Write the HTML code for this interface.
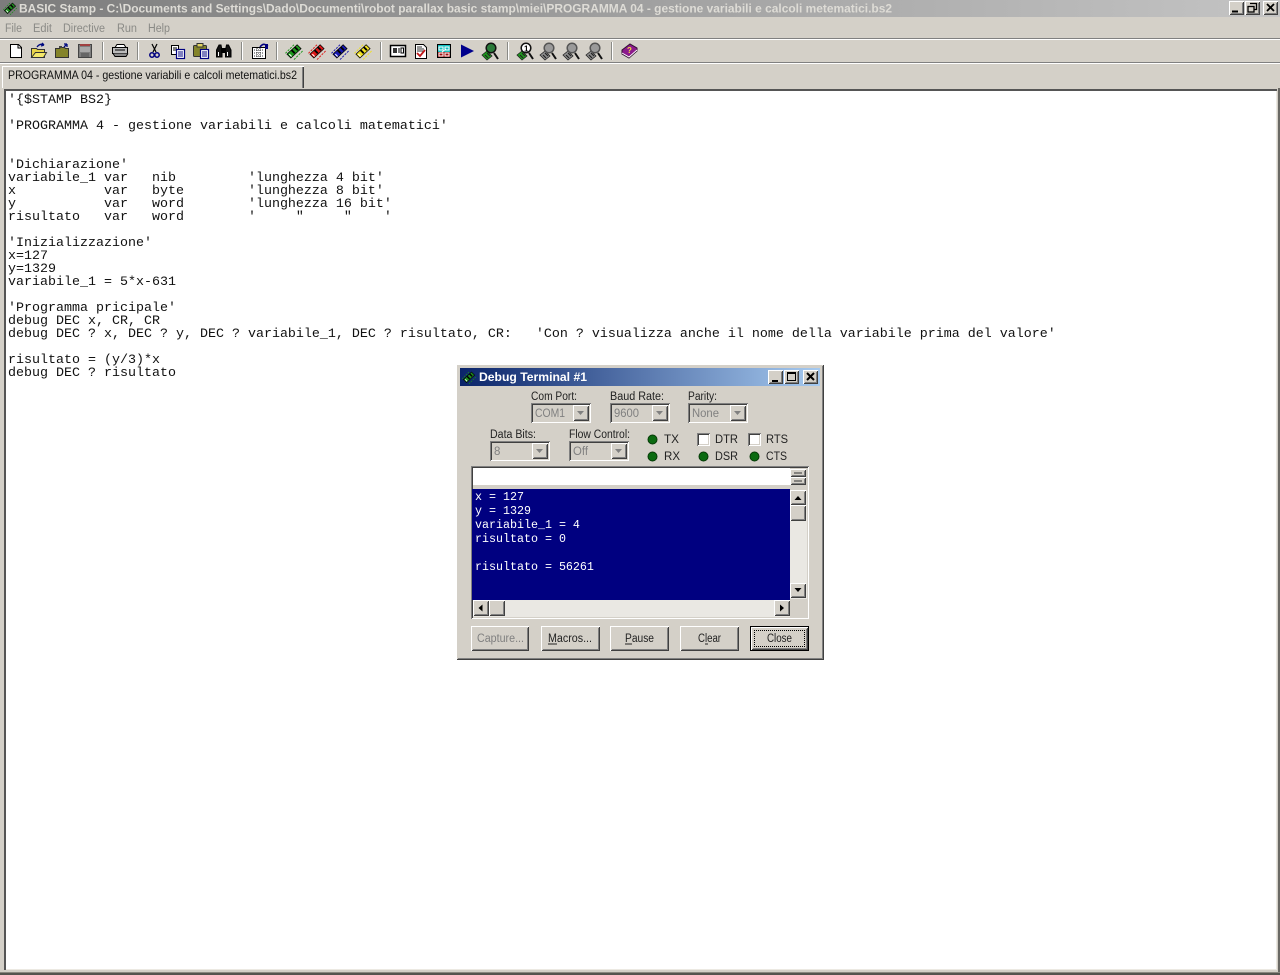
<!DOCTYPE html>
<html><head><meta charset="utf-8"><title>BASIC Stamp</title>
<style>
html,body{margin:0;padding:0;width:1280px;height:975px;overflow:hidden;background:#d4d0c8}
div{position:absolute;box-sizing:border-box}
.b{background:#d4d0c8;box-shadow:inset 1px 1px #fff,inset -1px -1px #404040,inset 2px 2px #d4d0c8,inset -2px -2px #808080}
.s{box-shadow:inset 1px 1px #808080,inset -1px -1px #fff,inset 2px 2px #404040,inset -2px -2px #d4d0c8}
pre{position:absolute;margin:0;font-family:"Liberation Mono",monospace}
svg{position:absolute;left:0;top:0}
text{font-family:"Liberation Sans",sans-serif;font-size:11.5px;fill:#222}
.d{fill:#808080}
.m{fill:#8a8a86}
</style></head>
<body>
<div style="left:0;top:0;width:1280px;height:17px;background:linear-gradient(90deg,#7c7c7c,#c4c4c4)"></div>
<div style="left:0;top:38px;width:1280px;height:1px;background:#808080"></div>
<div style="left:0;top:39px;width:1280px;height:1px;background:#fff"></div>
<div style="left:0;top:62px;width:1280px;height:1px;background:#808080"></div>
<div style="left:0;top:63px;width:1280px;height:1px;background:#fff"></div>
<!-- window buttons -->
<div class="b" style="left:1229px;top:1px;width:15px;height:14px"></div>
<div class="b" style="left:1245px;top:1px;width:15px;height:14px"></div>
<div class="b" style="left:1263px;top:1px;width:15px;height:14px"></div>
<!-- tab -->
<div style="left:2px;top:66px;width:302px;height:22px;background:#d4d0c8;box-shadow:inset 1px 1px #fff,inset -1px 0 #404040,inset -2px 0 #808080"></div>
<!-- editor -->
<div style="left:4px;top:89px;width:1273px;height:881px;background:#fff;box-shadow:inset 2px 2px #555,inset -1px -1px #ece9e2"></div>
<div style="left:0;top:972px;width:1280px;height:1px;background:#8a8880"></div>
<div style="left:0;top:973px;width:1280px;height:2px;background:#55544f"></div>
<div style="left:1278px;top:88px;width:2px;height:884px;background:#6a6964"></div>
<pre style="left:8px;top:94px;font-size:13.33px;line-height:13px;color:#111">'{$STAMP BS2}

'PROGRAMMA 4 - gestione variabili e calcoli matematici'


'Dichiarazione'
variabile_1 var   nib         'lunghezza 4 bit'
x           var   byte        'lunghezza 8 bit'
y           var   word        'lunghezza 16 bit'
risultato   var   word        '     "     "    '

'Inizializzazione'
x=127
y=1329
variabile_1 = 5*x-631

'Programma pricipale'
debug DEC x, CR, CR
debug DEC ? x, DEC ? y, DEC ? variabile_1, DEC ? risultato, CR:   'Con ? visualizza anche il nome della variabile prima del valore'

risultato = (y/3)*x
debug DEC ? risultato</pre>
<!-- dialog -->
<div class="b" style="left:456px;top:364px;width:368px;height:296px"></div>
<div style="left:460px;top:368px;width:360px;height:18px;background:linear-gradient(90deg,#0a246a,#a6caf0)"></div>
<div class="b" style="left:768px;top:370px;width:15px;height:14px"></div>
<div class="b" style="left:784px;top:370px;width:15px;height:14px"></div>
<div class="b" style="left:803px;top:370px;width:15px;height:14px"></div>
<div class="s" style="left:531px;top:403px;width:60px;height:20px"></div>
<div class="b" style="left:573px;top:405px;width:16px;height:16px"></div>
<div class="s" style="left:610px;top:403px;width:60px;height:20px"></div>
<div class="b" style="left:652px;top:405px;width:16px;height:16px"></div>
<div class="s" style="left:688px;top:403px;width:60px;height:20px"></div>
<div class="b" style="left:730px;top:405px;width:16px;height:16px"></div>
<div class="s" style="left:490px;top:441px;width:60px;height:20px"></div>
<div class="b" style="left:532px;top:443px;width:16px;height:16px"></div>
<div class="s" style="left:569px;top:441px;width:60px;height:20px"></div>
<div class="b" style="left:611px;top:443px;width:16px;height:16px"></div>
<div class="s" style="left:697px;top:433px;width:13px;height:13px;background:#fff"></div>
<div class="s" style="left:748px;top:433px;width:13px;height:13px;background:#fff"></div>
<!-- terminal frame -->
<div class="s" style="left:471px;top:466px;width:338px;height:153px;background:#d4d0c8"></div>
<div style="left:473px;top:468px;width:317px;height:17px;background:#fff"></div>
<div class="b" style="left:790px;top:469px;width:16px;height:8px"></div>
<div class="b" style="left:790px;top:477px;width:16px;height:8px"></div>
<div style="left:472px;top:489px;width:318px;height:111px;background:#000080"></div>
<div style="left:790px;top:490px;width:17px;height:109px;background:#eae8e3"></div>
<div class="b" style="left:790px;top:490px;width:16px;height:15px"></div>
<div class="b" style="left:790px;top:505px;width:16px;height:16px"></div>
<div class="b" style="left:790px;top:583px;width:16px;height:15px"></div>
<div style="left:473px;top:600px;width:317px;height:17px;background:#eae8e3"></div>
<div class="b" style="left:473px;top:600px;width:16px;height:16px"></div>
<div class="b" style="left:489px;top:600px;width:16px;height:16px"></div>
<div class="b" style="left:774px;top:600px;width:16px;height:16px"></div>
<pre style="left:475px;top:490px;font-size:11.67px;line-height:14px;color:#fff">x = 127
y = 1329
variabile_1 = 4
risultato = 0

risultato = 56261</pre>
<div class="b" style="left:471px;top:626px;width:58px;height:25px"></div>
<div class="b" style="left:541px;top:626px;width:59px;height:25px"></div>
<div class="b" style="left:610px;top:626px;width:59px;height:25px"></div>
<div class="b" style="left:680px;top:626px;width:59px;height:25px"></div>
<div class="b" style="left:751px;top:627px;width:57px;height:23px;outline:1px solid #000"></div>
<div style="left:754px;top:630px;width:51px;height:17px;border:1px dotted #000"></div>

<svg width="1280" height="975" viewBox="0 0 1280 975">
<defs>
<g id="chip">
<path d="M-9 4 L4 -8 L9 -3 L-4 9 Z" fill="currentColor" stroke="#000" stroke-width="1"/>
<path d="M-3 -1 L1 3 M1 -5 L5 -1" stroke="#000" stroke-width="2.4"/>
<path d="M-6 4 L-3 7" stroke="#fff" stroke-width="1.4"/>
<path d="M-9 1 L-11 3 M-6 -2 L-8 0 M-3 -5 L-5 -3 M0 -8 L-2 -6 M9 2 L11 0 M6 5 L8 3 M3 8 L5 6 M0 11 L2 9" stroke="currentColor" stroke-width="1.2"/>
</g>
<g id="mag">
<path d="M-8 4 L-3 0 L2 5 L-3 9 Z" fill="currentColor" stroke="#222" stroke-width=".8"/>
<path d="M-5 4 L-2 7 M-3 2 L0 5" stroke="#222" stroke-width="1.2"/>
<path d="M4 2 L8 8" stroke="#111" stroke-width="2"/>
<circle cx="1" cy="-3" r="4.800" fill="var(--f,#fff)" stroke="var(--r,#111)" stroke-width="1.500"/>
</g>
</defs>
<!-- title -->
<use href="#chip" transform="translate(10,8) scale(.62)" color="#1e8a1e"/>
<text x="19" y="12.5" textLength="873" lengthAdjust="spacingAndGlyphs" style="font-weight:bold;font-size:12px;fill:#dedcd6">BASIC Stamp - C:\Documents and Settings\Dado\Documenti\robot parallax basic stamp\miei\PROGRAMMA 04 - gestione variabili e calcoli metematici.bs2</text>
<path d="M1232 11.5h6" stroke="#000" stroke-width="2"/>
<path d="M1250 3.500h6.500v6h-2" fill="none" stroke="#000" stroke-width="1.300"/><rect x="1248" y="6.500" width="6" height="5.500" fill="none" stroke="#000" stroke-width="1.300"/>
<path d="M1267 4l7 7M1274 4l-7 7" stroke="#000" stroke-width="1.800"/>
<!-- menu -->
<g class="m"><text class="m" x="5" y="32" textLength="17" lengthAdjust="spacingAndGlyphs">File</text><text class="m" x="33" y="32" textLength="19" lengthAdjust="spacingAndGlyphs">Edit</text><text class="m" x="63" y="32" textLength="42" lengthAdjust="spacingAndGlyphs">Directive</text><text class="m" x="117" y="32" textLength="20" lengthAdjust="spacingAndGlyphs">Run</text><text class="m" x="148" y="32" textLength="22" lengthAdjust="spacingAndGlyphs">Help</text></g>
<!-- toolbar separators -->
<path d="M102.500 42v18M137.500 42v18M241.500 42v18M276.500 42v18M380.500 42v18M507.500 42v18M611.500 42v18" stroke="#8a8a86"/>
<path d="M103.500 42v18M138.500 42v18M242.500 42v18M277.500 42v18M381.500 42v18M508.500 42v18M612.500 42v18" stroke="#fff"/>
<!-- new -->
<path d="M10.500 44.500h8l3 3v10h-11z" fill="#fff" stroke="#000"/><path d="M18 45v3h3" fill="none" stroke="#000"/>
<!-- open -->
<path d="M31.500 57.500v-9h5l1 1h7v8z" fill="#e8d44a" stroke="#333"/><path d="M31.500 57.500l4-5h11l-3 5z" fill="#f4e86a" stroke="#333"/><path d="M37 47q3-4 7-2M44 45l-2-2M44 45l-3 1" fill="none" stroke="#000a80" stroke-width="1.300"/>
<!-- open2 -->
<path d="M55.500 57.500v-9h4l1-1h4l1 1h3v9z" fill="#84842a" stroke="#333"/><path d="M64 47l3-3M67 44h-3M67 44v3" fill="none" stroke="#000a80" stroke-width="1.300"/><rect x="59" y="46" width="3" height="2" fill="#444"/>
<!-- save disabled -->
<rect x="78.500" y="44.500" width="13" height="13" fill="#7f7f7f" stroke="#444"/><rect x="80" y="44" width="10" height="2" fill="#a04040"/><rect x="80" y="47" width="10" height="5" fill="#a8a8a8"/><rect x="81" y="53" width="8" height="4" fill="#666"/>
<!-- print -->
<path d="M115 47.500l2-3h7l2 3" fill="#fff" stroke="#000"/><rect x="112.500" y="47.500" width="15" height="6" fill="#bbb" stroke="#000"/><path d="M113 53.500l2 3h11l2-3" fill="#888" stroke="#000"/><path d="M115 50h10" stroke="#000"/>
<!-- cut -->
<path d="M152 44l4 8M157 44l-4 8" stroke="#000" stroke-width="1.200"/><circle cx="152" cy="55" r="2.200" fill="none" stroke="#000080" stroke-width="1.500"/><circle cx="157" cy="55" r="2.200" fill="none" stroke="#000080" stroke-width="1.500"/>
<!-- copy -->
<rect x="171.500" y="45.500" width="7" height="9" fill="#fff" stroke="#000"/><path d="M173 48h4M173 50h4" stroke="#000"/><rect x="176.500" y="49.500" width="8" height="9" fill="#fff" stroke="#000080" stroke-width="1.200"/><path d="M178 52h5M178 54h5M178 56h5" stroke="#000080"/>
<!-- paste -->
<rect x="193.500" y="45.500" width="13" height="11" rx="1" fill="#84842a" stroke="#333"/><rect x="197" y="43.500" width="6" height="3.500" fill="#e0d460" stroke="#333"/><rect x="200.500" y="49.500" width="8" height="9" fill="#fff" stroke="#000080" stroke-width="1.200"/><path d="M202 52h5M202 54h5M202 56h5" stroke="#000080"/>
<!-- find -->
<path d="M216.500 57v-7l2.500-5h2l1 5v7zM225.500 57v-7l1-5h2l2.500 5v7z" fill="#111" stroke="#000"/><rect x="221" y="48" width="5" height="5" fill="#000"/><path d="M218.500 52v4M227.500 52v4" stroke="#fff"/>
<!-- props -->
<rect x="252.500" y="47.500" width="13" height="11" fill="#fff" stroke="#000"/><path d="M254 50h10M254 53h10M254 56h10M257 48v10M260 48v10" stroke="#333" stroke-dasharray="1 1"/><path d="M260 47q3-4 6-2l2 1" fill="none" stroke="#000080" stroke-width="1.500"/><rect x="265" y="44" width="3" height="5" fill="#000080"/>
<!-- chips -->
<use href="#chip" transform="translate(294,51) scale(.78)" color="#1c9a1c"/>
<use href="#chip" transform="translate(317,51) scale(.78)" color="#e01818"/>
<use href="#chip" transform="translate(340,51) scale(.78)" color="#1818b0"/>
<use href="#chip" transform="translate(363,51) scale(.78)" color="#f0e020"/>
<!-- id -->
<rect x="390.500" y="45.500" width="15" height="11" fill="#fff" stroke="#000" stroke-width="1.500"/><rect x="393" y="48" width="4" height="5" fill="#333"/><path d="M399 48v5M401 48v5h2.500v-5z" fill="none" stroke="#000"/>
<!-- doc check -->
<path d="M415.500 44.500h8l3 3v11h-11z" fill="#fff" stroke="#000"/><path d="M417 47h5M417 49h7M417 51h7" stroke="#333"/><path d="M417 53l3 3 5-6" fill="none" stroke="#c01818" stroke-width="1.800"/>
<!-- color -->
<rect x="437.500" y="44.500" width="13" height="13" fill="#10c0c0" stroke="#000"/><rect x="438" y="52" width="12" height="5" fill="#a01010"/><path d="M439 47h4v3h-4zM445 47h4v3h-4zM439 53h4v3h-4zM445 53h4v3h-4zM442 52l4-3" fill="none" stroke="#fff"/>
<!-- run -->
<path d="M461 44.500l13 6.500-13 6.500z" fill="#00008c"/>
<!-- magnifiers -->
<use href="#mag" transform="translate(490,51)" color="#1c9a1c" style="--f:#2a7a3a"/>
<use href="#mag" transform="translate(525,51)" color="#1c9a1c"/>
<text x="524" y="51.500" style="font-size:8px;font-weight:bold;fill:#000">1</text>
<use href="#mag" transform="translate(548,51)" color="#8c8c8c" style="--f:#9a9a9a;--r:#555"/>
<use href="#mag" transform="translate(571,51)" color="#8c8c8c" style="--f:#9a9a9a;--r:#555"/>
<use href="#mag" transform="translate(594,51)" color="#8c8c8c" style="--f:#9a9a9a;--r:#555"/>
<!-- book -->
<path d="M622 50l8-6 7 4v3l-8 7-7-4z" fill="#8c1a8c" stroke="#301030"/><path d="M622 53l7 4 8-7" fill="none" stroke="#fff"/><text x="627" y="53" style="font-size:8px;font-weight:bold;fill:#f0e040">?</text>
<!-- tab label -->
<text x="8" y="79" textLength="289" lengthAdjust="spacingAndGlyphs" style="font-size:12px;fill:#111">PROGRAMMA 04 - gestione variabili e calcoli metematici.bs2</text>
<!-- dialog title -->
<use href="#chip" transform="translate(469,377) scale(.62)" color="#1e8a1e"/>
<text x="479" y="381" textLength="108" lengthAdjust="spacingAndGlyphs" style="font-weight:bold;font-size:12px;fill:#fff">Debug Terminal #1</text>
<path d="M772 381h6" stroke="#000" stroke-width="2"/>
<rect x="787.500" y="372.500" width="8" height="8" fill="none" stroke="#000"/><path d="M788 373h8" stroke="#000" stroke-width="2"/>
<path d="M807 373l7 7M814 373l-7 7" stroke="#000" stroke-width="2"/>
<!-- labels -->
<text x="531" y="400" textLength="46" lengthAdjust="spacingAndGlyphs">Com Port:</text>
<text x="610" y="400" textLength="54" lengthAdjust="spacingAndGlyphs">Baud Rate:</text>
<text x="688" y="400" textLength="29" lengthAdjust="spacingAndGlyphs">Parity:</text>
<text x="490" y="438" textLength="46" lengthAdjust="spacingAndGlyphs">Data Bits:</text>
<text x="569" y="438" textLength="61" lengthAdjust="spacingAndGlyphs">Flow Control:</text>
<text class="d" x="535" y="417" textLength="30" lengthAdjust="spacingAndGlyphs">COM1</text>
<text class="d" x="614" y="417" textLength="25" lengthAdjust="spacingAndGlyphs">9600</text>
<text class="d" x="692" y="417" textLength="27" lengthAdjust="spacingAndGlyphs">None</text>
<text class="d" x="494" y="455">8</text>
<text class="d" x="573" y="455" textLength="15" lengthAdjust="spacingAndGlyphs">Off</text>
<g fill="#808080"><path d="M577 411h7l-3.500 4zM656 411h7l-3.500 4zM734 411h7l-3.500 4zM536 449h7l-3.500 4zM615 449h7l-3.500 4z"/></g>
<g fill="#0a6a10" stroke="#063a08"><circle cx="652.500" cy="439.500" r="4.500"/><circle cx="652.500" cy="456.500" r="4.500"/><circle cx="703.500" cy="456.500" r="4.500"/><circle cx="754.500" cy="456.500" r="4.500"/></g>
<text x="664" y="443" textLength="15" lengthAdjust="spacingAndGlyphs">TX</text>
<text x="664" y="460" textLength="16" lengthAdjust="spacingAndGlyphs">RX</text>
<text x="715" y="443" textLength="23" lengthAdjust="spacingAndGlyphs">DTR</text>
<text x="715" y="460" textLength="23" lengthAdjust="spacingAndGlyphs">DSR</text>
<text x="766" y="443" textLength="22" lengthAdjust="spacingAndGlyphs">RTS</text>
<text x="766" y="460" textLength="21" lengthAdjust="spacingAndGlyphs">CTS</text>
<path d="M794 473h8M794 481h8" stroke="#333"/>
<!-- scroll arrows -->
<path d="M794.500 500h7l-3.500-4zM794.500 588h7l-3.500 4zM482.500 604.500v7l-4-3.500zM780 604.500v7l4-3.500z" fill="#000"/>
<!-- button labels -->
<text class="d" x="477" y="642" textLength="47" lengthAdjust="spacingAndGlyphs">Capture...</text>
<text x="548" y="642" textLength="44" lengthAdjust="spacingAndGlyphs">Macros...</text>
<path d="M548 644h9M625 644h7M705 644h3" stroke="#222"/>
<text x="625" y="642" textLength="29" lengthAdjust="spacingAndGlyphs">Pause</text>
<text x="698" y="642" textLength="23" lengthAdjust="spacingAndGlyphs">Clear</text>
<text x="767" y="642" textLength="25" lengthAdjust="spacingAndGlyphs">Close</text>
</svg>
</body></html>
